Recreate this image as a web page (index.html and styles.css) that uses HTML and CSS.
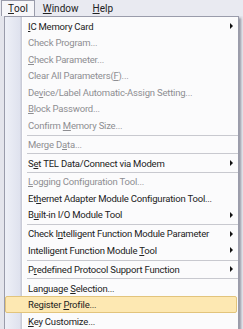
FILE: index.html
```html
<!DOCTYPE html>
<html lang="en">
<head>
  <meta charset="UTF-8" />
  <title>Tool menu</title>
  <link rel="stylesheet" href="styles.css">
</head>
<body>

  <div class="menubar">
    <span class="top open"><u>T</u>ool</span>
    <span class="top"><u>W</u>indow</span>
    <span class="top"><u>H</u>elp</span>
  </div>

  <div class="dropdown">
    <div class="item sub"><span><u>I</u>C Memory Card</span><i class="arrow"></i></div>
    <div class="item off"><span>Check Program...</span></div>
    <div class="item off"><span><u>C</u>heck Parameter...</span></div>
    <div class="item off"><span>Clear All Parameters(<u>F</u>)...</span></div>
    <div class="item off"><span>De<u>v</u>ice/Label Automatic-Assign Setting...</span></div>
    <div class="item off"><span><u>B</u>lock Password...</span></div>
    <div class="item off"><span>Confirm <u>M</u>emory Size...</span></div>
    <div class="sep"></div>
    <div class="item off"><span>Merge D<u>a</u>ta...</span></div>
    <div class="sep"></div>
    <div class="item sub"><span>S<u>e</u>t TEL Data/Connect via Modem</span><i class="arrow"></i></div>
    <div class="sep"></div>
    <div class="item off"><span><u>L</u>ogging Configuration Tool...</span></div>
    <div class="item"><span>Et<u>h</u>ernet Adapter Module Configuration Tool...</span></div>
    <div class="item sub"><span>B<u>u</u>ilt-in I/O Module Tool</span><i class="arrow"></i></div>
    <div class="sep"></div>
    <div class="item sub"><span>Check I<u>n</u>telligent Function Module Parameter</span><i class="arrow"></i></div>
    <div class="item sub"><span>Intelligent Function Module <u>T</u>ool</span><i class="arrow"></i></div>
    <div class="sep"></div>
    <div class="item sub"><span>P<u>r</u>edefined Protocol Support Function</span><i class="arrow"></i></div>
    <div class="sep"></div>
    <div class="item"><span>Language <u>S</u>election...</span></div>
    <div class="item hot"><span>Register <u>P</u>rofile...</span></div>
    <div class="item"><span><u>K</u>ey Customize...</span></div>
  </div>

</body>
</html>
```

FILE: styles.css
```css
* {
  margin: 0;
  padding: 0;
  box-sizing: border-box;
}

html, body {
  height: 100%;
  overflow: hidden;
  font-family: Roboto, "Liberation Sans", sans-serif;
  font-size: 9.5px;
  letter-spacing: -0.2px;
  color: #222;
  background-color: #e4e5ec;
}

u {
  text-decoration: underline;
  text-underline-offset: 1px;
}

.menubar {
  height: 16px;
  display: flex;
  align-items: stretch;
  padding-left: 1px;
  font-size: 10px;
  letter-spacing: 0;
  background-color: #e9eaf1;
}

.top {
  display: flex;
  align-items: center;
  padding: 0 6px 0 6px;
  border: 1px solid transparent;
  border-bottom: 0;
}

.top.open {
  background-color: #f6f6f9;
  border-color: #9a9cab;
  margin-right: 1px;
}

.dropdown {
  margin-left: 4px;
  width: 235px;
  height: 320px;
  padding-top: 1px;
  border: 1px solid #9a9cab;
  border-bottom: 0;
  background: linear-gradient(to right,
    #eef0f7 0, #dfe2ee 15px, #c9cbd7 16px, #c9cbd7 17px,
    #ffffff 17px, #ffffff 18px, #fbfbfc 18px);
  box-shadow: 2px 2px 2px rgba(60, 60, 80, 0.45);
}

.item {
  height: 16.5px;
  display: flex;
  align-items: center;
  padding-left: 23px;
  padding-right: 5px;
  white-space: nowrap;
}

.item.off {
  color: #8e8e92;
}

.item.hot {
  background-color: #fde8b2;
  border: 1px solid #e2c47c;
  border-radius: 2px;
  padding-left: 22px;
  margin-right: 1px;
}

.arrow {
  margin-left: auto;
  width: 0;
  height: 0;
  border-left: 3px solid #111;
  border-top: 3px solid transparent;
  border-bottom: 3px solid transparent;
}

.sep {
  height: 2.4px;
  margin-left: 22px;
  border-top: 1px solid #c8c9cf;
  margin-top: 1px;
  margin-bottom: -1px;
}
```
